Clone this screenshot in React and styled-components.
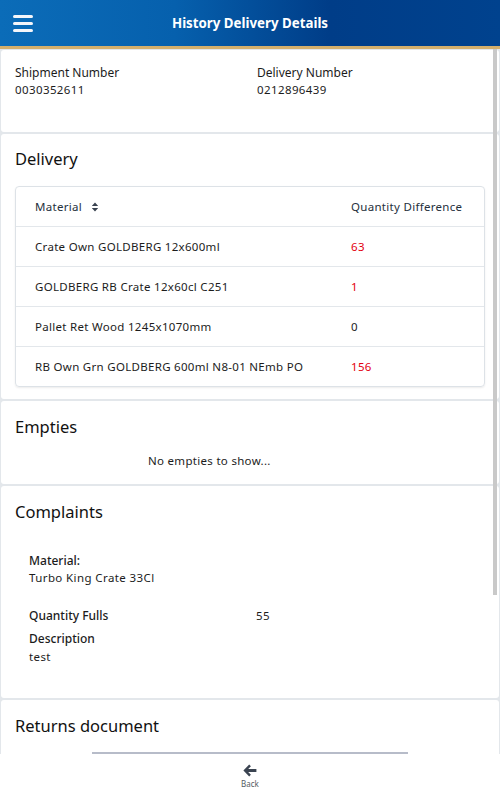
import React from "react";
import styled, { createGlobalStyle } from "styled-components";

const GlobalStyle = createGlobalStyle`
  html, body {
    margin: 0;
    padding: 0;
    background: #ffffff;
  }
  body {
    font-family: "Noto Sans", "Open Sans", sans-serif;
    color: #1c1c1c;
  }
`;

const deliveryRows = [
  { material: "Crate Own GOLDBERG 12x600ml", qty: "63", red: true },
  { material: "GOLDBERG RB Crate 12x60cl C251", qty: "1", red: true },
  { material: "Pallet Ret Wood 1245x1070mm", qty: "0", red: false },
  { material: "RB Own Grn GOLDBERG 600ml N8-01 NEmb PO", qty: "156", red: true },
];

function App() {
  return (
    <>
      <GlobalStyle />
      <Screen>
        <Header>
          <MenuButton aria-label="menu">
            <span />
            <span />
            <span />
          </MenuButton>
          <Title>History Delivery Details</Title>
        </Header>

        <Content>
          <Card>
            <InfoGrid>
              <InfoItem>
                <Label>Shipment Number</Label>
                <Value>0030352611</Value>
              </InfoItem>
              <InfoItem>
                <Label>Delivery Number</Label>
                <Value>0212896439</Value>
              </InfoItem>
            </InfoGrid>
          </Card>

          <Card $bottom={12}>
            <SectionTitle>Delivery</SectionTitle>
            <Table>
              <TableRow $head>
                <Cell>
                  Material
                  <SortIcon width="8" height="10" viewBox="0 0 8 10">
                    <path d="M4 0.5 L7.2 4 H0.8 Z M4 9.5 L7.2 6 H0.8 Z" fill="#3a4350" />
                  </SortIcon>
                </Cell>
                <Cell>Quantity Difference</Cell>
              </TableRow>
              {deliveryRows.map((row) => (
                <TableRow key={row.material}>
                  <Cell>{row.material}</Cell>
                  <Cell $red={row.red}>{row.qty}</Cell>
                </TableRow>
              ))}
            </Table>
          </Card>

          <Card $top={15} $bottom={16}>
            <SectionTitle>Empties</SectionTitle>
            <EmptyNote>No empties to show...</EmptyNote>
          </Card>

          <Card $top={15}>
            <SectionTitle>Complaints</SectionTitle>
            <Complaint>
              <Field>
                <FieldLabel>Material:</FieldLabel>
                <Value>Turbo King Crate 33Cl</Value>
              </Field>
              <FieldRow>
                <FieldLabel>Quantity Fulls</FieldLabel>
                <Value>55</Value>
              </FieldRow>
              <Field>
                <FieldLabel>Description</FieldLabel>
                <Value>test</Value>
              </Field>
            </Complaint>
          </Card>

          <Card $top={15}>
            <SectionTitle>Returns document</SectionTitle>
            <DocPreview />
          </Card>

          <ScrollThumb />
        </Content>

        <BottomBar>
          <BackButton>
            <svg width="14" height="13" viewBox="0 0 14 13">
              <path
                d="M6.2 0.6 L7.9 2.3 L5.2 5 H13.4 V8 H5.2 L7.9 10.7 L6.2 12.4 L0.4 6.5 Z"
                fill="#3b4451"
              />
            </svg>
            <BackLabel>Back</BackLabel>
          </BackButton>
        </BottomBar>
      </Screen>
    </>
  );
}

export default App;

const Screen = styled.div`
  width: 500px;
  height: 800px;
  display: flex;
  flex-direction: column;
  overflow: hidden;
  background: #ffffff;
`;

const Header = styled.header`
  flex: 0 0 auto;
  height: 46px;
  border-bottom: 3px solid #d4af6c;
  background: linear-gradient(90deg, #0b6cb8 0%, #0660ad 35%, #003d88 66%, #00428e 100%);
  display: flex;
  align-items: center;
  position: relative;
`;

const MenuButton = styled.div`
  width: 20px;
  margin-left: 13px;
  display: flex;
  flex-direction: column;
  gap: 4px;

  span {
    display: block;
    height: 3px;
    border-radius: 2px;
    background: #f4f6fa;
  }
`;

const Title = styled.h1`
  position: absolute;
  left: 0;
  right: 0;
  margin: 0;
  text-align: center;
  font-size: 13.3px;
  font-weight: 700;
  color: #ffffff;
  pointer-events: none;
`;

const Content = styled.main`
  flex: 1 1 auto;
  overflow: hidden;
  position: relative;
  background: #e3e7eb;
  padding: 1px 0 0 0;
  display: flex;
  flex-direction: column;
  gap: 2px;
`;

const Card = styled.section`
  flex: 0 0 auto;
  background: #ffffff;
  border-radius: 3px;
  margin: 0 1px;
  padding: ${(p) => p.$top ?? 14}px 14px ${(p) => p.$bottom ?? 16}px 14px;
`;

const InfoGrid = styled.div`
  display: grid;
  grid-template-columns: 242px 1fr;
  padding-bottom: 18px;
`;

const InfoItem = styled.div`
  display: flex;
  flex-direction: column;
`;

const Label = styled.div`
  font-size: 12px;
  line-height: 17px;
  color: #1c1c1c;
`;

const Value = styled.div`
  font-size: 11.5px;
  line-height: 17px;
  letter-spacing: 0.4px;
  color: #1c1c1c;
`;

const SectionTitle = styled.h2`
  margin: 0;
  font-size: 16.5px;
  line-height: 22px;
  font-weight: 400;
  color: #111111;
`;

const Table = styled.div`
  margin: 16px 0 0 0;
  border: 1px solid #dde2e7;
  border-radius: 4px;
  box-shadow: 0 1px 2px rgba(0, 0, 0, 0.08);
  overflow: hidden;
`;

const TableRow = styled.div`
  box-sizing: border-box;
  display: grid;
  grid-template-columns: 316px 1fr;
  height: ${(p) => (p.$head ? 39 : 40)}px;
  align-items: center;
  padding-left: 19px;
  border-top: ${(p) => (p.$head ? "none" : "1px solid #e3e7eb")};
  color: ${(p) => (p.$head ? "#25303c" : "#1c1c1c")};
`;

const Cell = styled.div`
  font-size: 11.5px;
  letter-spacing: 0.3px;
  display: flex;
  align-items: center;
  color: ${(p) => (p.$red ? "#e3000f" : "inherit")};
`;

const SortIcon = styled.svg`
  margin-left: 9px;
`;

const EmptyNote = styled.div`
  padding: 15px 0 0 133px;
  font-size: 11.5px;
  letter-spacing: 0.3px;
  color: #1c1c1c;
`;

const Complaint = styled.div`
  padding: 29px 0 17px 14px;
  display: flex;
  flex-direction: column;
`;

const Field = styled.div`
  display: flex;
  flex-direction: column;
  margin-bottom: 21px;

  &:last-child {
    margin-bottom: 0;
  }
  &:last-child > div + div {
    margin-top: 1px;
  }
`;

const FieldRow = styled.div`
  display: grid;
  grid-template-columns: 227px 1fr;
  margin-bottom: 6px;
`;

const FieldLabel = styled.div`
  font-size: 12px;
  line-height: 17px;
  font-weight: 500;
  color: #1c1c1c;
`;

const DocPreview = styled.div`
  margin: 15px auto 0 auto;
  width: 316px;
  height: 120px;
  border-top: 2px solid #b7bcc9;
  background: #ffffff;
`;

const ScrollThumb = styled.div`
  position: absolute;
  top: 0;
  right: 3px;
  width: 4px;
  height: 546px;
  background: #c9c9c9;
`;

const BottomBar = styled.nav`
  flex: 0 0 46px;
  background: #ffffff;
  display: flex;
  justify-content: center;
  align-items: flex-start;
`;

const BackButton = styled.div`
  display: flex;
  flex-direction: column;
  align-items: center;
  padding-top: 10px;
`;

const BackLabel = styled.span`
  font-size: 8px;
  line-height: 10px;
  margin-top: 2px;
  color: #555b63;
`;
